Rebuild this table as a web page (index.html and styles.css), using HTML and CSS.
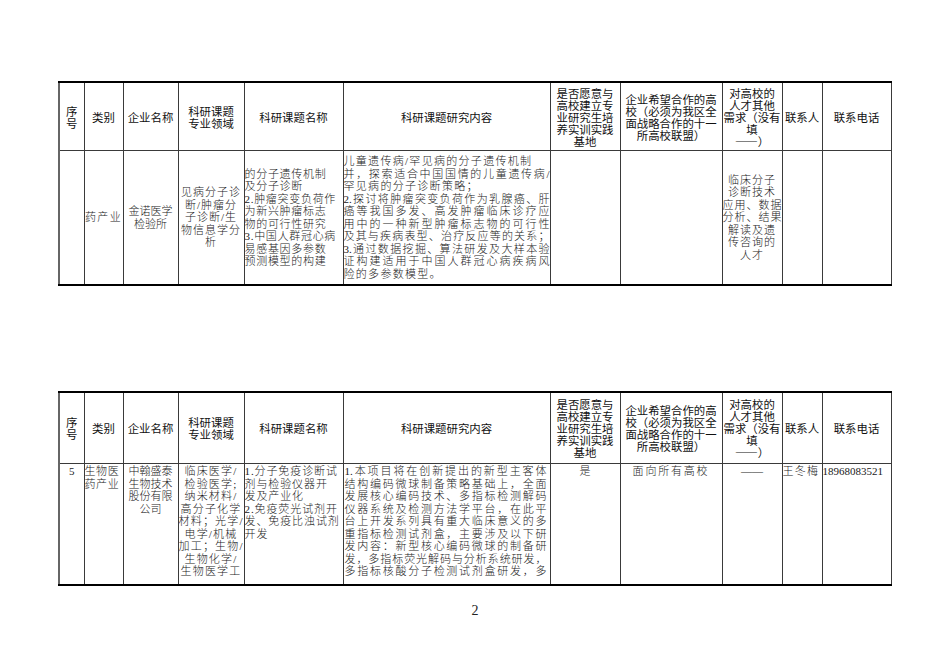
FILE: index.html
```html
<!DOCTYPE html>
<html lang="zh-CN">
<head>
<meta charset="utf-8">
<title>科研课题需求表</title>
<link rel="stylesheet" href="styles.css">
</head>
<body>
<div class="page">
  <table class="sheet sheet-top">
    <colgroup>
      <col class="w1"><col class="w2"><col class="w3"><col class="w4"><col class="w5"><col class="w6"><col class="w7"><col class="w8"><col class="w9"><col class="w10"><col class="w11">
    </colgroup>
    <tr class="head head-top">
      <th>序<br>号</th>
      <th>类别</th>
      <th>企业名称</th>
      <th>科研课题<br>专业领域</th>
      <th>科研课题名称</th>
      <th>科研课题研究内容</th>
      <th>是否愿意与<br>高校建立专<br>业研究生培<br>养实训实践<br>基地</th>
      <th>企业希望合作的高<br>校（必须为我区全<br>面战略合作的十一<br>所高校联盟）</th>
      <th>对高校的<br>人才其他<br>需求（没有<br>填<br>——）</th>
      <th>联系人</th>
      <th>联系电话</th>
    </tr>
    <tr class="body body-top">
      <td></td>
      <td class="t-cat">药产业</td>
      <td class="t-co">金诺医学<br>检验所</td>
      <td class="t-field">见病分子诊<br>断/肿瘤分<br>子诊断/生<br>物信息学分<br>析</td>
      <td class="t-name">的分子遗传机制<br>及分子诊断<br>2.肿瘤突变负荷作<br>为新兴肿瘤标志<br>物的可行性研究<br>3.中国人群冠心病<br>易感基因多参数<br>预测模型的构建</td>
      <td class="t-content">
        <span class="ln short">儿童遗传病/罕见病的分子遗传机制</span>
        <span class="ln">并，探索适合中国国情的儿童遗传病/</span>
        <span class="ln short">罕见病的分子诊断策略；</span>
        <span class="ln">2.探讨将肿瘤突变负荷作为乳腺癌、肝</span>
        <span class="ln">癌等我国多发、高发肿瘤临床诊疗应</span>
        <span class="ln">用中的一种新型肿瘤标志物的可行性</span>
        <span class="ln">及其与疾病表型、治疗反应等的关系；</span>
        <span class="ln">3.通过数据挖掘、算法研发及大样本验</span>
        <span class="ln">证构建适用于中国人群冠心病疾病风</span>
        <span class="ln short">险的多参数模型。</span>
      </td>
      <td></td>
      <td></td>
      <td class="t-need">临床分子<br>诊断技术<br>应用、数据<br>分析、结果<br>解读及遗<br>传咨询的<br>人才</td>
      <td></td>
      <td></td>
    </tr>
  </table>

  <table class="sheet sheet-bottom">
    <colgroup>
      <col class="w1"><col class="w2"><col class="w3"><col class="w4"><col class="w5"><col class="w6"><col class="w7"><col class="w8"><col class="w9"><col class="w10"><col class="w11">
    </colgroup>
    <tr class="head head-bottom">
      <th>序<br>号</th>
      <th>类别</th>
      <th>企业名称</th>
      <th>科研课题<br>专业领域</th>
      <th>科研课题名称</th>
      <th>科研课题研究内容</th>
      <th>是否愿意与<br>高校建立专<br>业研究生培<br>养实训实践<br>基地</th>
      <th>企业希望合作的高<br>校（必须为我区全<br>面战略合作的十一<br>所高校联盟）</th>
      <th>对高校的<br>人才其他<br>需求（没有<br>填<br>——）</th>
      <th>联系人</th>
      <th>联系电话</th>
    </tr>
    <tr class="body body-bottom">
      <td class="b-no">5</td>
      <td class="b-cat">生物医<br>药产业</td>
      <td class="b-co">中翰盛泰<br>生物技术<br>股份有限<br>公司</td>
      <td class="b-field">临床医学/<br>检验医学;<br>纳米材料/<br>高分子化学<br>材料；光学/<br>电学/机械<br>加工；生物/<br>生物化学/<br>生物医学工</td>
      <td class="b-name">1.分子免疫诊断试<br>剂与检验仪器开<br>发及产业化<br>2.免疫荧光试剂开<br>发、免疫比浊试剂<br>开发</td>
      <td class="b-content">
        <span class="ln">1.本项目将在创新提出的新型主客体</span>
        <span class="ln">结构编码微球制备策略基础上，全面</span>
        <span class="ln">发展核心编码技术、多指标检测解码</span>
        <span class="ln">仪器系统及检测方法学平台，在此平</span>
        <span class="ln">台上开发系列具有重大临床意义的多</span>
        <span class="ln">重指标检测试剂盒，主要涉及以下研</span>
        <span class="ln">发内容：新型核心编码微球的制备研</span>
        <span class="ln">发，多指标荧光解码与分析系统研发，</span>
        <span class="ln">多指标核酸分子检测试剂盒研发，多</span>
      </td>
      <td class="b-yes">是</td>
      <td class="b-aim">面向所有高校</td>
      <td class="b-need">——</td>
      <td class="b-contact">王冬梅</td>
      <td class="b-tel">18968083521</td>
    </tr>
  </table>

  <div class="pageno">2</div>
</div>
</body>
</html>
```

FILE: styles.css
```css
html, body {
  margin: 0;
  padding: 0;
  background: #ffffff;
}

.page {
  width: 950px;
  height: 672px;
  padding: 81px 0 0 58px;
  box-sizing: border-box;
  position: relative;
  overflow: hidden;
}

.sheet {
  border-collapse: collapse;
  table-layout: fixed;
  width: 832px;
  border-top: 2px solid #000;
  border-bottom: 2px solid #000;
  border-left: 2px solid #666;
  border-right: 1px solid #444;
}

.sheet-bottom {
  margin-top: 105px;
}

.w1 { width: 25px; }
.w2 { width: 39px; }
.w3 { width: 55px; }
.w4 { width: 66px; }
.w5 { width: 99px; }
.w6 { width: 207px; }
.w7 { width: 70px; }
.w8 { width: 102px; }
.w9 { width: 60px; }
.w10 { width: 40px; }
.w11 { width: 69px; }

.sheet th,
.sheet td {
  border: 1px solid #3a3a3a;
  padding: 0;
  overflow: hidden;
}

.sheet th {
  font-family: "Noto Sans CJK SC", "Noto Sans", sans-serif;
  font-weight: 400;
  font-size: 11.4px;
  line-height: 12px;
  color: #111;
  text-align: center;
  vertical-align: middle;
  white-space: nowrap;
}

.head-top th { height: 67px; }
.head-bottom th { height: 70px; }

.sheet td {
  font-family: "Liberation Serif", "Noto Sans CJK SC", serif;
  font-size: 11px;
  font-weight: 300;
  color: #1a1a1a;
  white-space: nowrap;
  line-height: 12.5px;
}

.body-top td {
  height: 133px;
  vertical-align: middle;
}

.body-bottom td {
  height: 119px;
  vertical-align: top;
  padding-top: 1px;
}

/* justified text lines in the long content cells */
.ln {
  display: block;
  white-space: normal;
  text-align: justify;
  text-align-last: justify;
}

.ln.short {
  text-align: left;
  text-align-last: left;
  letter-spacing: 1.3px;
}

/* top table body cells */
.t-cat { text-align: center; letter-spacing: 1.3px; }
.t-co { text-align: center; font-size: 10px; line-height: 12px; }
.t-field { text-align: center; letter-spacing: 1px; line-height: 12.2px; }
.t-name { text-align: left; letter-spacing: 0.7px; line-height: 11.6px; padding-left: 2px; }
.t-content { line-height: 12.6px; padding: 0 2px 0 1px; }
.t-need { text-align: center; letter-spacing: 1px; line-height: 13px; }

/* bottom table body cells */
.b-no { text-align: center; font-size: 12px; }
.b-cat { text-align: left; letter-spacing: 0.6px; padding-left: 2px; }
.b-co { text-align: center; font-size: 10px; line-height: 12.3px; }
.b-field { text-align: center; letter-spacing: 1.2px; }
.b-name { text-align: left; letter-spacing: 0.9px; padding-left: 2px; }
.body-bottom .b-content { padding: 1px 3px 0 1px; }
.b-yes { text-align: center; }
.b-aim { text-align: center; letter-spacing: 1.8px; }
.b-need { text-align: center; }
.b-contact { text-align: left; letter-spacing: 1.3px; padding-left: 1px; }
.b-tel { text-align: left; font-size: 11.6px; }

.pageno {
  position: absolute;
  left: 0;
  right: 0;
  top: 603px;
  text-align: center;
  font-family: "Liberation Serif", serif;
  font-size: 14px;
  color: #222;
}
```
